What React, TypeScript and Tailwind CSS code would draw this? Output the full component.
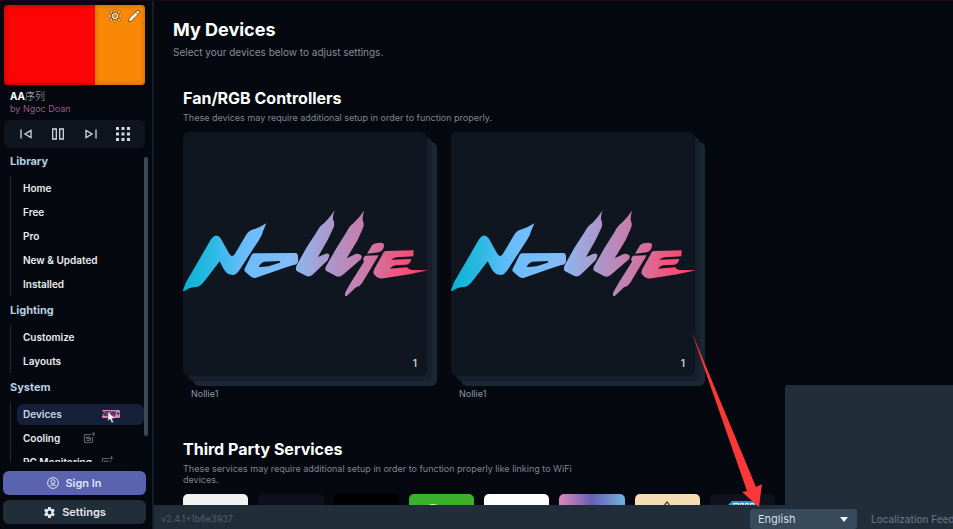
import React from "react";

const FONT = "font-['Inter','Noto_Sans_CJK_SC',sans-serif]";

function NollieLogo({ id }: { id: string }) {
  return (
    <svg viewBox="9 -204 732 732" className="block h-full w-full" role="img" aria-label="Nollie">
      <defs>
        <linearGradient id={id} gradientUnits="userSpaceOnUse" x1="9" y1="0" x2="741" y2="0">
          <stop offset="0" stopColor="#08b2d2" />
          <stop offset="0.12" stopColor="#2cb9e4" />
          <stop offset="0.26" stopColor="#6cbdfd" />
          <stop offset="0.44" stopColor="#82bbf8" />
          <stop offset="0.53" stopColor="#9ea7dd" />
          <stop offset="0.65" stopColor="#b58dc0" />
          <stop offset="0.76" stopColor="#cd78a6" />
          <stop offset="0.86" stopColor="#ea5b86" />
          <stop offset="1" stopColor="#fb4461" />
        </linearGradient>
      </defs>
      <g fill={`url(#${id})`} fillRule="evenodd">
        <path d="M8 273 L18 247 L93 118 Q108 96 122 115 L147 160 Q155 174 164 163 L200 102 Q208 90 224 87 Q240 82 259 70 L249 94 Q247 106 237 120 L181 206 Q170 224 160 225 L146 223 Q138 220 131 207 L119 184 L76 240 Q63 258 50 261 Q27 262 15 272 Z" />
        <path d="M222 160 L348 159 Q356 160 354 185 Q352 193 340 195 L310 205 L226 234 Q221 235 213 230 L194 214 Q191 210 197 200 L213 168 Q216 160 222 160 Z M252 185 Q244 187 237 198 Q235 202 242 201 L266 199 L299 188 Q303 184 298 183 Z" />
        <path d="M464 31 Q458 47 459 58 Q465 70 461 82 L443 120 L414 171 L435 162 Q449 158 448 168 L443 181 L397 225 Q388 232 379 228 L350 213 Q345 208 350 196 L381 140 L410 96 Q420 76 433 69 Q449 54 464 31 Z" />
        <path d="M553 31 Q547 48 548 60 Q554 73 549 84 L533 120 L500 175 L527 162 Q536 159 546 168 L543 178 L487 226 Q478 233 469 229 L438 212 Q434 208 438 199 L469 145 L500 95 Q509 77 521 69 Q537 55 553 31 Z" />
        <path d="M561 161 L576 136 Q582 128 600 128 Q615 128 612 139 Q609 154 596 157 Z" />
        <path d="M555 167 L596 166 Q592 174 581 191 L547 248 Q540 259 528 262 L501 287 Q492 292 496 277 L513 247 L552 185 L549 177 Z" />
        <path d="M617 153 L701 151 L700 169 L650 172 Q638 174 634 179 L694 177 Q691 192 679 194 L645 196 Q635 199 630 206 L681 202 Q687 210 694 210 L742 211 L688 223 L611 235 Q600 237 590 231 L582 223 Q578 218 583 207 L607 164 Q610 154 617 153 Z" />
      </g>
    </svg>
  );
}

function DeviceCard({ id }: { id: string }) {
  return (
    <button className="flex w-[244px] flex-col text-left">
      <span className="relative block h-[244px] w-full">
        <span className="absolute inset-0 translate-x-[10px] translate-y-[10px] rounded-md bg-[#1c2735]" />
        <span className="absolute inset-0 translate-x-[5px] translate-y-[5px] rounded-md bg-[#161f2b]" />
        <span className="absolute inset-0 overflow-hidden rounded-md bg-[#10161f]">
          <NollieLogo id={id} />
        </span>
        <span className="absolute right-[10px] bottom-[6px] text-[10px] leading-[14px] font-semibold text-[#c8ced6]">1</span>
      </span>
      <span className="mt-3 pl-2 text-[9px] leading-3 text-[#8f98a5]">Nollie1</span>
    </button>
  );
}

function ProIcon() {
  return (
    <svg viewBox="0 0 12 12" className="h-3 w-3" fill="none" stroke="#59616c" strokeWidth="1.200" aria-hidden="true">
      <path d="M8 2.500H2.500Q1.500 2.500 1.500 3.500V9.500Q1.500 10.500 2.500 10.500H8.500Q9.500 10.500 9.500 9.500V5" />
      <path d="M7.500 5H4Q3.500 5 3.500 5.700T4 6.400H7Q7.500 6.400 7.500 7.200T7 8.300H3.500" />
      <path d="M10.500 0.300V3.700M8.800 2H12" />
    </svg>
  );
}

function NavItem({ label, active, extra }: { label: string; active?: boolean; extra?: React.ReactNode }) {
  return (
    <li className="flex h-6 items-center">
      <a
        href="#"
        className={
          "flex h-[21px] w-full items-center rounded-md pl-[6px] text-[10px] leading-4 font-semibold " +
          (active ? "bg-[#172039] text-[#ccd6e6]" : "text-[#e9ebee]")
        }
      >
        <span className="whitespace-nowrap">{label}</span>
        {extra}
      </a>
    </li>
  );
}

function NavSection({ title, children }: { title: string; children: React.ReactNode }) {
  return (
    <section className="pb-1">
      <h2 className="pl-[10px] text-[11px] leading-[21px] font-bold text-[#b5cfe3]">{title}</h2>
      <ul className="mt-1 ml-[10px] border-l border-[#222a35] pl-[6px]">{children}</ul>
    </section>
  );
}

function Sidebar() {
  return (
    <aside className="flex w-[154px] shrink-0 flex-col border-r-2 border-[#141d29] pt-[5px]">
      <div className="mr-[7px] ml-1 flex h-20 justify-end overflow-hidden rounded-[4px] bg-[#fb0505] shadow-[inset_0_0_5px_rgba(90,0,0,0.5)]">
        <div className="flex w-[50px] items-start justify-end gap-[5px] bg-[#f88806] pt-1 pr-1 shadow-[inset_0_0_5px_rgba(120,60,0,0.5)]">
          <button aria-label="Brightness">
            <svg viewBox="0 0 14 14" className="h-[14px] w-[14px]" fill="none" stroke="#6b3d00" strokeWidth="2.400" strokeLinecap="round">
              <circle cx="7" cy="7" r="2.400" />
              <path d="M7 1v1.300M7 11.700V13M1 7h1.300M11.700 7H13M2.800 2.800l.8.8M10.400 10.400l.8.8M11.200 2.800l-.8.8M3.600 10.400l-.8.8" />
              <g stroke="#fff0d0" strokeWidth="1.300">
                <circle cx="7" cy="7" r="2.400" />
                <path d="M7 1v1.300M7 11.700V13M1 7h1.300M11.700 7H13M2.800 2.800l.8.8M10.400 10.400l.8.8M11.200 2.800l-.8.8M3.600 10.400l-.8.8" />
              </g>
            </svg>
          </button>
          <button aria-label="Edit">
            <svg viewBox="0 0 14 14" className="h-[14px] w-[14px]" fill="#fff3dc" stroke="#6b3d00" strokeWidth="0.800" strokeLinejoin="round">
              <path d="M1.300 12.700L2 9.400L9.700 1.900Q11 .9 12.200 2T12.100 4.500L4.500 12Z" />
              <path d="M8.600 3l2.500 2.500" fill="none" />
            </svg>
          </button>
        </div>
      </div>
      <div className="pt-[5px] pl-[10px]">
        <div className="text-[10px] leading-[13px] font-bold text-white">
          AA<span className="font-light text-[#b9bcc2]">序列</span>
        </div>
        <div className="text-[9px] leading-[11px] text-[#955a88]">by Ngoc Doan</div>
      </div>
      <div className="mt-[6px] mr-[7px] ml-1 flex h-7 shrink-0 items-center justify-between rounded-md bg-[#0e151f] px-[15px] text-[#d5d9df]">
        <button aria-label="Previous">
          <svg viewBox="0 0 14 14" className="h-[14px] w-[14px]" fill="none" stroke="currentColor" strokeWidth="1.300">
            <path d="M2 2.500v9M12 3.500v7L6 7Z" />
          </svg>
        </button>
        <button aria-label="Pause">
          <svg viewBox="0 0 14 14" className="h-[14px] w-[14px]" fill="none" stroke="currentColor" strokeWidth="1.300">
            <path d="M1.700 2h3.600v10H1.700ZM8.700 2h3.600v10H8.700Z" />
          </svg>
        </button>
        <button aria-label="Next">
          <svg viewBox="0 0 14 14" className="h-[14px] w-[14px]" fill="none" stroke="currentColor" strokeWidth="1.300">
            <path d="M12 2.500v9M2 3.500v7L8 7Z" />
          </svg>
        </button>
        <button aria-label="Effects grid">
          <svg viewBox="0 0 14 14" className="h-[14px] w-[14px]" fill="currentColor">
            <path d="M0 0h3v3H0ZM5.500 0h3v3h-3ZM11 0h3v3h-3ZM0 5.500h3v3H0ZM5.500 5.500h3v3h-3ZM11 5.500h3v3h-3ZM0 11h3v3H0ZM5.500 11h3v3h-3ZM11 11h3v3h-3Z" />
          </svg>
        </button>
      </div>
      <div className="mt-[3px] flex min-h-0 flex-1">
        <nav className="min-w-0 flex-1 overflow-hidden">
          <NavSection title="Library">
            <NavItem label="Home" />
            <NavItem label="Free" />
            <NavItem label="Pro" />
            <NavItem label="New & Updated" />
            <NavItem label="Installed" />
          </NavSection>
          <NavSection title="Lighting">
            <NavItem label="Customize" />
            <NavItem label="Layouts" />
          </NavSection>
          <NavSection title="System">
            <NavItem
              label="Devices"
              active
              extra={
                <span className="relative mr-6 ml-auto rounded-[1px] bg-[#d987bd] text-[6px] leading-[8px] font-extrabold text-[#3a1838]">
                  NEW+
                  <svg viewBox="0 0 10 14" className="absolute top-[1px] left-[5px] h-[13px] w-[9px]" aria-hidden="true">
                    <path d="M1 0.500V11L3.500 8.800L5.300 13L7.200 12.200L5.400 8.200H9Z" fill="#fff" stroke="#30283c" strokeWidth="0.600" />
                  </svg>
                </span>
              }
            />
            <NavItem label="Cooling" extra={<span className="mr-[49px] ml-auto"><ProIcon /></span>} />
            <NavItem label="PC Monitoring" extra={<span className="mr-[31px] ml-auto"><ProIcon /></span>} />
          </NavSection>
        </nav>
        <div className="mt-[6px] mr-1 mb-[26px] w-1 rounded-full bg-[#374a5b]" />
      </div>
      <div className="mt-[9px] mr-[6px] mb-[5px] ml-[3px] flex flex-col gap-[5px]">
        <button className="flex h-6 items-center justify-center gap-[6px] rounded-md bg-[#5a64ae] text-[11px] font-semibold text-[#dfe3f6]">
          <svg viewBox="0 0 12 12" className="h-3 w-3" fill="none" stroke="currentColor" strokeWidth="1" aria-hidden="true">
            <circle cx="6" cy="6" r="5.400" />
            <circle cx="6" cy="4.700" r="2" />
            <path d="M2.300 9.800Q3 7.800 6 7.800T9.700 9.800" />
          </svg>
          Sign In
        </button>
        <button className="flex h-6 items-center justify-center gap-[6px] rounded-md bg-[#212d39] text-[11px] font-semibold text-[#e4e8ec]">
          <svg viewBox="0 0 24 24" className="h-[13px] w-[13px]" fill="currentColor" aria-hidden="true">
            <path d="M19.400 13a7.600 7.600 0 0 0 0-2l2.100-1.600a.5.5 0 0 0 .1-.7l-2-3.400a.5.500 0 0 0-.6-.2l-2.500 1a7.300 7.300 0 0 0-1.700-1l-.4-2.600a.5.500 0 0 0-.5-.5h-4a.5.500 0 0 0-.5.500L9 5.100a7.300 7.300 0 0 0-1.700 1l-2.500-1a.5.500 0 0 0-.6.200l-2 3.400a.5.500 0 0 0 .1.700L4.500 11a7.600 7.600 0 0 0 0 2l-2.100 1.600a.5.500 0 0 0-.1.700l2 3.400c.1.200.4.300.6.200l2.500-1a7.300 7.300 0 0 0 1.700 1l.4 2.600c0 .3.200.5.500.5h4c.3 0 .5-.2.500-.5l.4-2.600a7.300 7.300 0 0 0 1.700-1l2.500 1c.2.100.5 0 .6-.2l2-3.400a.5.500 0 0 0-.1-.7ZM12 15.500a3.500 3.500 0 1 1 0-7 3.500 3.500 0 0 1 0 7Z" />
          </svg>
          Settings
        </button>
      </div>
    </aside>
  );
}

function ServiceTiles() {
  const tile = "flex h-16 items-start justify-center overflow-hidden rounded-[5px] ";
  return (
    <div className="mt-[9px] grid w-full max-w-[592px] grid-cols-8 gap-[10px]">
      <div className={tile + "bg-[#f2f2f2]"} />
      <div className={tile + "bg-[#0c111b]"} />
      <div className={tile + "bg-black"} />
      <div className={tile + "bg-[#3cb12c]"}>
        <svg viewBox="0 0 20 20" className="mt-[9px] -ml-4 h-5 w-5" fill="none" stroke="#d8f5d4" strokeWidth="2" aria-hidden="true">
          <circle cx="10" cy="10" r="8" />
        </svg>
      </div>
      <div className={tile + "bg-white"} />
      <div className={tile + "bg-linear-to-r from-[#dc86b8] via-[#6760b4] to-[#6fb2dc]"} />
      <div className={tile + "bg-[#f5dcb5]"}>
        <svg viewBox="0 0 12 20" className="mt-[7px] h-5 w-3" fill="none" stroke="#332418" strokeWidth="1.200" aria-hidden="true">
          <path d="M2 7L5 2Q6 0 7 2L9 6L11 9" />
        </svg>
      </div>
      <div className={tile + "bg-[#0d121c]"}>
        <svg viewBox="0 0 30 20" className="mt-[6px] h-5 w-[30px]" aria-hidden="true">
          <path d="M0 6L5 1H30V20H0Z" fill="#2f94d8" />
          <path d="M6 3h6v5H6ZM13 3h4v5h-4ZM18 3h4v5h-4ZM23 3h4v5h-4Z" fill="#e4f1c9" />
          <path d="M8 4v4M10 4v4M15 4v4M20 4v4M25 4v4" stroke="#24516f" strokeWidth="1" />
        </svg>
      </div>
    </div>
  );
}

function Footer() {
  return (
    <footer className="flex h-6 shrink-0 items-end bg-[#212d39] pl-[7px]">
      <span className="text-[9px] leading-5 text-[#52606d]">v2.4.1+1b6e3937</span>
      <div className="relative ml-auto h-5 w-[107px] shrink-0">
        <select
          aria-label="Language"
          className="block h-5 w-full appearance-none rounded-[3px] bg-[#384b5c] pl-2 text-[11px] leading-5 text-[#d5dce3]"
          defaultValue="English"
        >
          <option>English</option>
        </select>
        <svg viewBox="0 0 8 5" className="pointer-events-none absolute top-2 right-[9px] h-[5px] w-2" fill="#f3f5f7" aria-hidden="true">
          <path d="M0 0H8L4 5Z" />
        </svg>
      </div>
      <a href="#" className="ml-[14px] w-[82px] shrink-0 overflow-hidden text-[10px] leading-5 font-medium whitespace-nowrap text-[#61707d]">
        Localization Feedback
      </a>
    </footer>
  );
}

export default function App() {
  return (
    <div className={"relative flex h-screen overflow-hidden bg-[#05080f] " + FONT}>
      <div className="absolute inset-x-0 top-0 h-px bg-[#1d0619]" />
      <Sidebar />
      <div className="flex min-w-0 flex-1 flex-col">
        <main className="min-h-0 flex-1 overflow-hidden pt-[18px] pl-[19px]">
          <h1 className="text-[18px] leading-6 font-bold text-white">My Devices</h1>
          <p className="mt-[3px] text-[10px] leading-[14px] text-[#848d99]">Select your devices below to adjust settings.</p>
          <section className="mt-7 pl-[10px]">
            <h2 className="text-[16px] leading-[22px] font-bold text-white">Fan/RGB Controllers</h2>
            <p className="mt-[3px] text-[9px] leading-[11px] text-[#7d8692]">
              These devices may require additional setup in order to function properly.
            </p>
            <div className="mt-[9px] flex gap-6">
              <DeviceCard id="nollie-a" />
              <DeviceCard id="nollie-b" />
            </div>
          </section>
          <section className="mt-[38px] pl-[10px]">
            <h2 className="text-[16px] leading-[22px] font-bold text-white">Third Party Services</h2>
            <p className="mt-[3px] max-w-[400px] text-[9px] leading-[11px] text-[#7d8692]">
              These services may require additional setup in order to function properly like linking to WiFi devices.
            </p>
            <ServiceTiles />
          </section>
        </main>
        <Footer />
      </div>
      <div className="absolute right-0 bottom-6 h-[120px] w-[168px] rounded-tl-[3px] bg-[#212d39]" />
      <svg viewBox="0 0 72 176" className="pointer-events-none absolute right-[190px] bottom-[22px] h-[176px] w-[72px]" fill="#fc3737" aria-hidden="true">
        <path d="M0.500 0.500L65 156L71 153L68 176L51 161L56 160Z" />
      </svg>
    </div>
  );
}
